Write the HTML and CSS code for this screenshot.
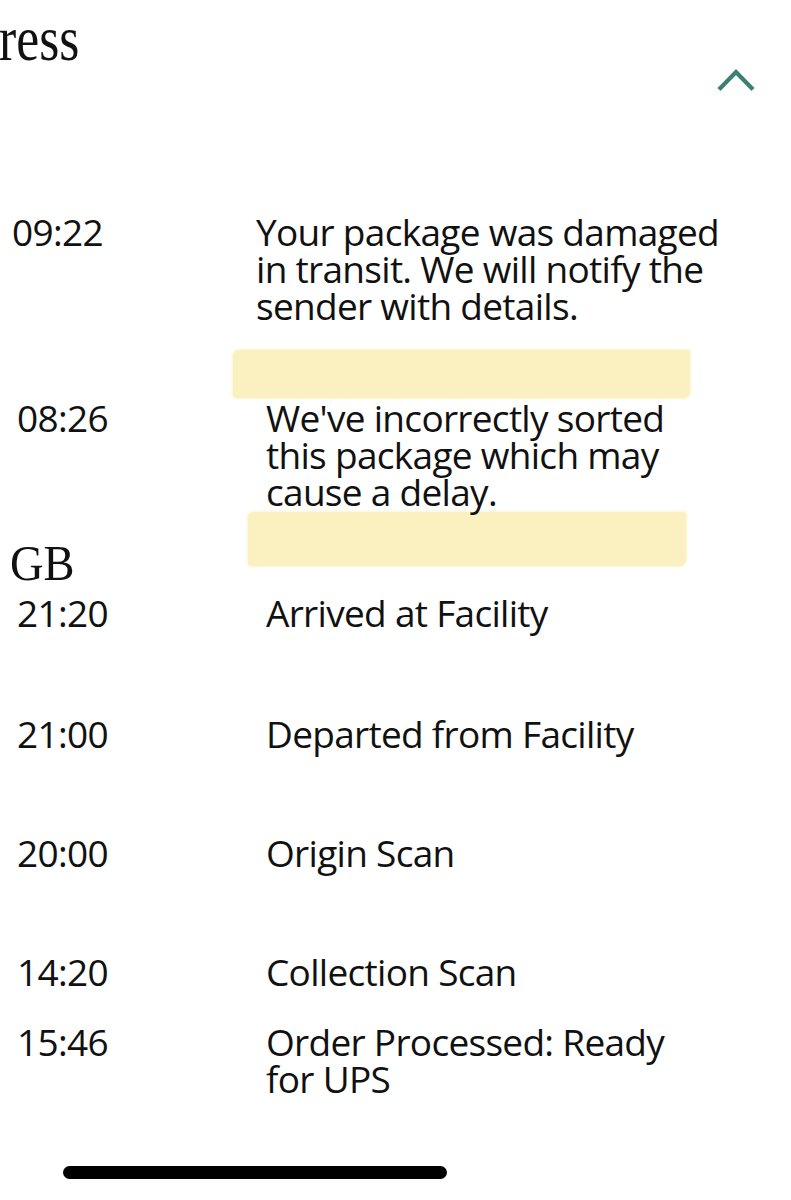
FILE: index.html
```html
<!DOCTYPE html>
<html lang="en">
<head>
<meta charset="utf-8">
<title>Tracking progress</title>
<link rel="stylesheet" href="styles.css">
</head>
<body>
<main class="screen">
  <header class="section-head">
    <h1 class="section-title">ress</h1>
    <button class="collapse" type="button" aria-label="Collapse">
      <svg width="38" height="24" viewBox="0 0 38 24" aria-hidden="true">
        <polyline points="2,21.5 19,4 36,21.5" fill="none" stroke="#3b8074" stroke-width="4.2" stroke-linecap="butt" stroke-linejoin="miter"/>
      </svg>
    </button>
  </header>

  <div class="events">
    <div class="event event--shifted">
      <div class="event-time">09:22</div>
      <div class="event-desc">Your package was damaged<br>in transit. We will notify the<br>sender with details.</div>
    </div>

    <div class="redaction redaction--a"></div>

    <div class="event event--after-mark">
      <div class="event-time">08:26</div>
      <div class="event-desc">We've incorrectly sorted<br>this package which may<br>cause a delay.</div>
    </div>

    <div class="day">
      <h2 class="day-label">GB</h2>
      <div class="redaction redaction--b"></div>
    </div>

    <div class="event event--first-of-day">
      <div class="event-time">21:20</div>
      <div class="event-desc">Arrived at Facility</div>
    </div>

    <div class="event event--spaced">
      <div class="event-time">21:00</div>
      <div class="event-desc">Departed from Facility</div>
    </div>

    <div class="event event--spaced-b">
      <div class="event-time">20:00</div>
      <div class="event-desc">Origin Scan</div>
    </div>

    <div class="event event--spaced-b">
      <div class="event-time">14:20</div>
      <div class="event-desc">Collection Scan</div>
    </div>

    <div class="event event--close">
      <div class="event-time">15:46</div>
      <div class="event-desc">Order Processed: Ready<br>for UPS</div>
    </div>
  </div>

  <div class="home-indicator"></div>
</main>
</body>
</html>
```

FILE: styles.css
```css
* {
  box-sizing: border-box;
}

html,
body {
  margin: 0;
  background: #ffffff;
}

body {
  width: 791px;
  height: 1200px;
  overflow: hidden;
  font-family: "Open Sans", "Noto Sans", sans-serif;
  color: #111111;
}

.screen {
  display: flex;
  flex-direction: column;
}

/* Header */
.section-head {
  display: flex;
  justify-content: space-between;
  align-items: flex-start;
  padding: 8px 36px 0 0;
}

.section-title {
  margin: 0 0 0 -1px;
  font-family: "Liberation Serif", "Times New Roman", serif;
  font-weight: 400;
  font-size: 63px;
  line-height: 62px;
  transform: scaleX(0.82);
  transform-origin: 0 50%;
}

.collapse {
  display: block;
  width: 38px;
  height: 24px;
  margin-top: 60px;
  padding: 0;
  border: 0;
  background: none;
}

.collapse svg {
  display: block;
}

/* Events */
.events {
  display: flex;
  flex-direction: column;
  margin-top: 121px;
}

.event {
  position: relative;
  z-index: 1;
  display: flex;
  padding-left: 17px;
  font-size: 37px;
  line-height: 37px;
  font-weight: 400;
  letter-spacing: -0.7px;
}

.event-time {
  flex: 0 0 249px;
}

.event-desc {
  flex: 1;
  white-space: nowrap;
}

.event--shifted {
  padding-left: 12px;
}

.event--shifted .event-time {
  flex-basis: 244px;
}

.event--after-mark {
  margin-top: 1px;
}

.event--first-of-day {
  margin-top: 6px;
}

.event--spaced {
  margin-top: 84px;
}

.event--spaced-b {
  margin-top: 82px;
}

.event--close {
  margin-top: 33px;
}

/* Marker redactions */
.redaction {
  background: #fbf0c0;
  border-radius: 6px 3px 7px 4px;
  box-shadow: 0 0 3px 1px rgba(251, 240, 192, 0.75);
}

.redaction--a {
  width: 457px;
  height: 48px;
  margin: 26px 0 0 233px;
}

.redaction--b {
  width: 438px;
  height: 54px;
  flex: 0 0 438px;
  margin-top: 2px;
}

/* Day heading */
.day {
  display: flex;
  align-items: flex-start;
}

.day-label {
  flex: 0 0 248px;
  margin: 28px 0 0 0;
  padding-left: 10px;
  font-family: "Liberation Serif", "Times New Roman", serif;
  font-weight: 400;
  font-size: 50px;
  line-height: 50px;
  transform: scaleX(0.93);
  transform-origin: 10px 50%;
}

/* Home indicator */
.home-indicator {
  width: 384px;
  height: 13px;
  margin: 69px 0 0 63px;
  border-radius: 7px;
  background: #000000;
}
```
